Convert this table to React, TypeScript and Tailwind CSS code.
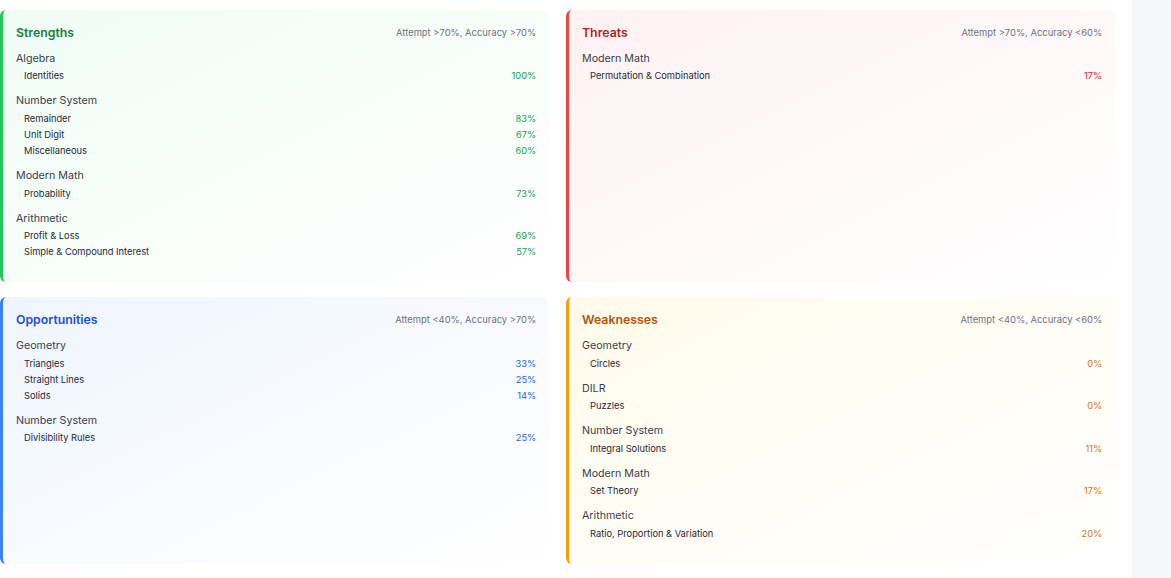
import React from "react";

type Topic = { name: string; pct: string };
type Group = { title: string; topics: Topic[] };

type Quadrant = {
  title: string;
  rule: string;
  card: string;
  titleColor: string;
  pctColor: string;
  groups: Group[];
};

const quadrants: Quadrant[] = [
  {
    title: "Strengths",
    rule: "Attempt >70%, Accuracy >70%",
    card: "border-[#22c55e] from-[#effdf3] via-[#f7fdf9] to-white",
    titleColor: "text-[#15803d]",
    pctColor: "text-[#16a34a]",
    groups: [
      { title: "Algebra", topics: [{ name: "Identities", pct: "100%" }] },
      {
        title: "Number System",
        topics: [
          { name: "Remainder", pct: "83%" },
          { name: "Unit Digit", pct: "67%" },
          { name: "Miscellaneous", pct: "60%" },
        ],
      },
      { title: "Modern Math", topics: [{ name: "Probability", pct: "73%" }] },
      {
        title: "Arithmetic",
        topics: [
          { name: "Profit & Loss", pct: "69%" },
          { name: "Simple & Compound Interest", pct: "57%" },
        ],
      },
    ],
  },
  {
    title: "Threats",
    rule: "Attempt >70%, Accuracy <60%",
    card: "border-[#ef4444] from-[#fef2f2] via-[#fef8f8] to-white",
    titleColor: "text-[#b91c1c]",
    pctColor: "text-[#dc2626]",
    groups: [
      {
        title: "Modern Math",
        topics: [{ name: "Permutation & Combination", pct: "17%" }],
      },
    ],
  },
  {
    title: "Opportunities",
    rule: "Attempt <40%, Accuracy >70%",
    card: "border-[#3b82f6] from-[#eff5ff] via-[#f7faff] to-white",
    titleColor: "text-[#1d4ed8]",
    pctColor: "text-[#2563eb]",
    groups: [
      {
        title: "Geometry",
        topics: [
          { name: "Triangles", pct: "33%" },
          { name: "Straight Lines", pct: "25%" },
          { name: "Solids", pct: "14%" },
        ],
      },
      {
        title: "Number System",
        topics: [{ name: "Divisibility Rules", pct: "25%" }],
      },
    ],
  },
  {
    title: "Weaknesses",
    rule: "Attempt <40%, Accuracy <60%",
    card: "border-[#f59e0b] from-[#fffbeb] via-[#fffdf5] to-white",
    titleColor: "text-[#b45309]",
    pctColor: "text-[#d97706]",
    groups: [
      { title: "Geometry", topics: [{ name: "Circles", pct: "0%" }] },
      { title: "DILR", topics: [{ name: "Puzzles", pct: "0%" }] },
      {
        title: "Number System",
        topics: [{ name: "Integral Solutions", pct: "11%" }],
      },
      { title: "Modern Math", topics: [{ name: "Set Theory", pct: "17%" }] },
      {
        title: "Arithmetic",
        topics: [{ name: "Ratio, Proportion & Variation", pct: "20%" }],
      },
    ],
  },
];

function QuadrantCard({ q }: { q: Quadrant }) {
  return (
    <div
      className={`rounded-[6px] border-l-[3px] bg-gradient-to-br pb-[13px] pl-[13px] pr-[12.8px] pt-[13.8px] ${q.card}`}
    >
      {/* Header */}
      <div className="mb-[7.8px] flex h-[19.2px] items-center justify-between">
        <h3 className={`text-[12.3px] font-semibold ${q.titleColor}`}>
          {q.title}
        </h3>
        <span className="text-[9.4px] text-[#6b7280]">{q.rule}</span>
      </div>

      {q.groups.map((g) => (
        <div key={g.title} className="mb-[9px]">
          <div className="mb-[1.6px] h-[16px] text-[10.7px] leading-[16px] text-[#374151]">
            {g.title}
          </div>
          {g.topics.map((t) => (
            <div
              key={t.name}
              className="flex h-[16px] items-center justify-between pl-[8px] text-[9.3px]"
            >
              <span className="text-[#1f2937]">{t.name}</span>
              <span className={q.pctColor}>{t.pct}</span>
            </div>
          ))}
        </div>
      ))}
    </div>
  );
}

export default function App() {
  return (
    <div
      className="flex min-h-[578px] bg-white"
      style={{ fontFamily: "Inter, 'Noto Sans', sans-serif" }}
    >
      <div className="w-[1132px] pr-[17px] pt-[10px]">
        <div className="grid grid-cols-2 gap-x-[17px] gap-y-[15px]">
          {quadrants.map((q) => (
            <QuadrantCard key={q.title} q={q} />
          ))}
        </div>
      </div>
      <div className="flex-1 bg-[#f6f7f8]" />
    </div>
  );
}
